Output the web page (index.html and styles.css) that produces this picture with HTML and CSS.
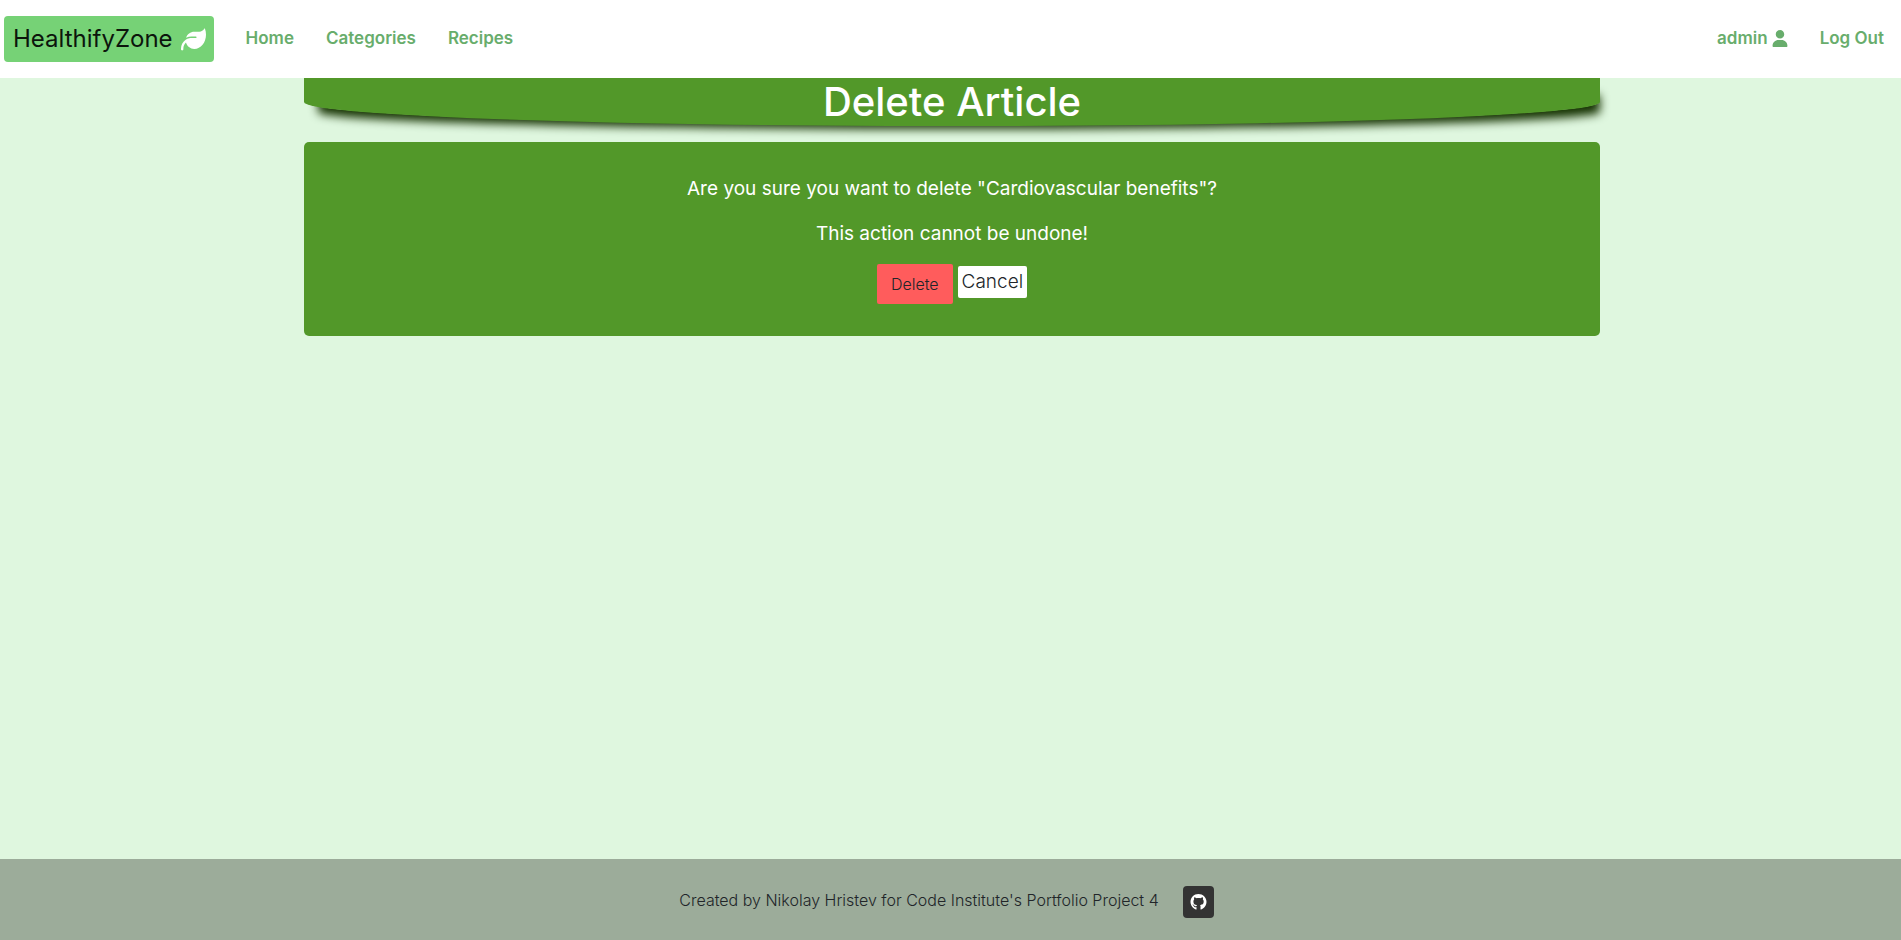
FILE: index.html
```html
<!DOCTYPE html>
<html lang="en">
<head>
<meta charset="utf-8">
<meta name="viewport" content="width=device-width, initial-scale=1">
<title>HealthifyZone</title>
<link rel="stylesheet" href="styles.css">
</head>
<body>
<header class="navbar">
  <a class="brand" href="#">HealthifyZone
    <svg class="leaf" viewBox="0 0 512 512" aria-hidden="true"><path fill="currentColor" d="M272 96c-78.600 0-145.100 51.500-167.700 122.500c33.600-17 71.500-26.500 111.700-26.500h88c8.800 0 16 7.200 16 16s-7.200 16-16 16H216c-16.600 0-32.700 1.900-48.300 5.400c-25.900 5.900-49.900 16.400-71.400 30.700C38.300 298.800 0 364.900 0 440v16c0 13.300 10.700 24 24 24s24-10.700 24-24v-16c0-48.700 20.700-92.500 53.800-123.200C121.600 392.300 190.300 448 272 448l1 0c132.100-.7 239-130.900 239-291.400c0-42.600-7.500-83.100-21.100-119.600c-2.600-6.900-12.700-6.600-16.200-.1C455.900 72.100 418.700 96 376 96z"/></svg>
  </a>
  <nav class="links">
    <a href="#">Home</a>
    <a href="#">Categories</a>
    <a href="#">Recipes</a>
  </nav>
  <nav class="links account" aria-label="Account">
    <a class="user" href="#">admin
      <svg class="person" viewBox="0 0 448 512" aria-hidden="true"><path fill="currentColor" d="M224 256a128 128 0 1 0 0-256 128 128 0 1 0 0 256zm-45.700 48C79.800 304 0 383.800 0 482.300 0 498.700 13.300 512 29.700 512h388.600c16.400 0 29.700-13.300 29.700-29.700 0-98.500-79.800-178.300-178.300-178.300z"/></svg>
    </a>
    <a href="#">Log Out</a>
  </nav>
</header>
<main class="container">
  <h1 class="banner">Delete Article</h1>
  <form class="panel">
    <p>Are you sure you want to delete "Cardiovascular benefits"?</p>
    <p>This action cannot be undone!</p>
    <div class="actions">
      <button class="delete" type="submit">Delete</button>
      <a class="cancel" href="#">Cancel</a>
    </div>
  </form>
</main>
<footer class="footer">
  <span>Created by Nikolay Hristev for Code Institute's Portfolio Project 4</span>
  <a class="github" href="#" aria-label="GitHub">
    <svg viewBox="0 0 496 496" aria-hidden="true"><path fill="currentColor" d="M165.900 389.400c0 2-2.300 3.600-5.200 3.600-3.300.3-5.600-1.300-5.600-3.600 0-2 2.300-3.600 5.200-3.600 3-.3 5.600 1.300 5.600 3.600zM244.800 0C106.100 0 0 105.300 0 244c0 110.900 69.800 205.800 169.500 239.200 12.800 2.300 17.300-5.600 17.300-12.100 0-6.200-.3-40.400-.3-61.400 0 0-70 15-84.700-29.800 0 0-11.400-29.100-27.800-36.600 0 0-22.900-15.700 1.600-15.400 0 0 24.900 2 38.600 25.800 21.900 38.600 58.600 27.500 72.900 20.900 2.300-16 8.800-27.100 16-33.700-55.900-6.200-112.300-14.300-112.300-110.500 0-27.500 7.600-41.300 23.600-58.900-2.600-6.500-11.100-33.300 2.600-67.900 20.900-6.500 69 27 69 27 20-5.600 41.500-8.500 62.800-8.500s42.800 2.900 62.800 8.500c0 0 48.100-33.600 69-27 13.700 34.700 5.200 61.400 2.600 67.900 16 17.700 25.800 31.500 25.800 58.900 0 96.500-58.900 104.200-114.800 110.500 9.200 7.900 17 22.900 17 46.400 0 33.700-.3 75.400-.3 83.600 0 6.500 4.600 14.400 17.300 12.100C428.200 449.800 496 354.900 496 244 496 105.300 383.500 0 244.800 0z"/></svg>
  </a>
</footer>
</body>
</html>
```
FILE: styles.css
```css
* { box-sizing: border-box; }

body {
  margin: 0;
  min-height: 100vh;
  display: flex;
  flex-direction: column;
  background: #dff7df;
  color: #212529;
  font-family: Inter, "Liberation Sans", sans-serif;
  font-size: 16px;
  font-weight: 300;
  line-height: 24px;
}

a { color: inherit; text-decoration: none; }

.navbar {
  display: flex;
  align-items: center;
  gap: 32px;
  padding: 16px 17px 16px 4px;
  background: #fff;
}

.brand {
  display: flex;
  align-items: center;
  gap: 8px;
  padding: 5px 8px 5px 9px;
  border-radius: 4px;
  background: #76d276;
  color: #0c150c;
  font-size: 24px;
  font-weight: 400;
  line-height: 36px;
}

.leaf { width: 25px; height: 25px; color: #fff; }

.links {
  display: flex;
  gap: 32px;
  padding-bottom: 2px;
  color: #68ad6c;
  font-size: 17px;
  font-weight: 600;
}

.account { margin-left: auto; }

.user { display: flex; align-items: center; gap: 4px; }

.person { width: 16px; height: 17px; }

.container {
  flex: 1;
  width: 100%;
  max-width: 1323px;
  margin: 0 auto;
  padding: 0 12px 0 15px;
}

.banner {
  margin: 0 0 16px;
  border-radius: 0 0 50% 50%;
  background: #529829;
  box-shadow: 7px 10px 10px -7px #173403;
  color: #fff;
  font-size: 40px;
  font-weight: 500;
  line-height: 48px;
  text-align: center;
}

.panel {
  position: relative;
  padding: 32px;
  border-radius: 5px;
  background: #529829;
  color: #fff;
  font-size: 19px;
  font-weight: 400;
  line-height: 29px;
  text-align: center;
}

.panel p { margin: 0 0 16px; }

.actions { display: flex; justify-content: center; align-items: flex-start; gap: 5px; }

.delete {
  padding: 8px 14px;
  border: 0;
  border-radius: 2px;
  background: #ff5c5c;
  color: #212529;
  font: inherit;
  font-size: 16px;
  font-weight: 300;
  line-height: 24px;
}

.cancel {
  margin-top: 2px;
  padding: 2px 4px;
  border-radius: 2px;
  background: #fff;
  color: #212529;
  font-weight: 300;
  line-height: 28px;
}

.footer {
  display: flex;
  justify-content: center;
  align-items: flex-start;
  gap: 24px;
  padding: 27px 8px 22px 0;
  background: #9cac9a;
}

.footer span { line-height: 28px; }

.github {
  display: flex;
  padding: 8px 7px;
  border-radius: 4px;
  background: #333;
  color: #fff;
}

.github svg { width: 17px; height: 16px; }
```
